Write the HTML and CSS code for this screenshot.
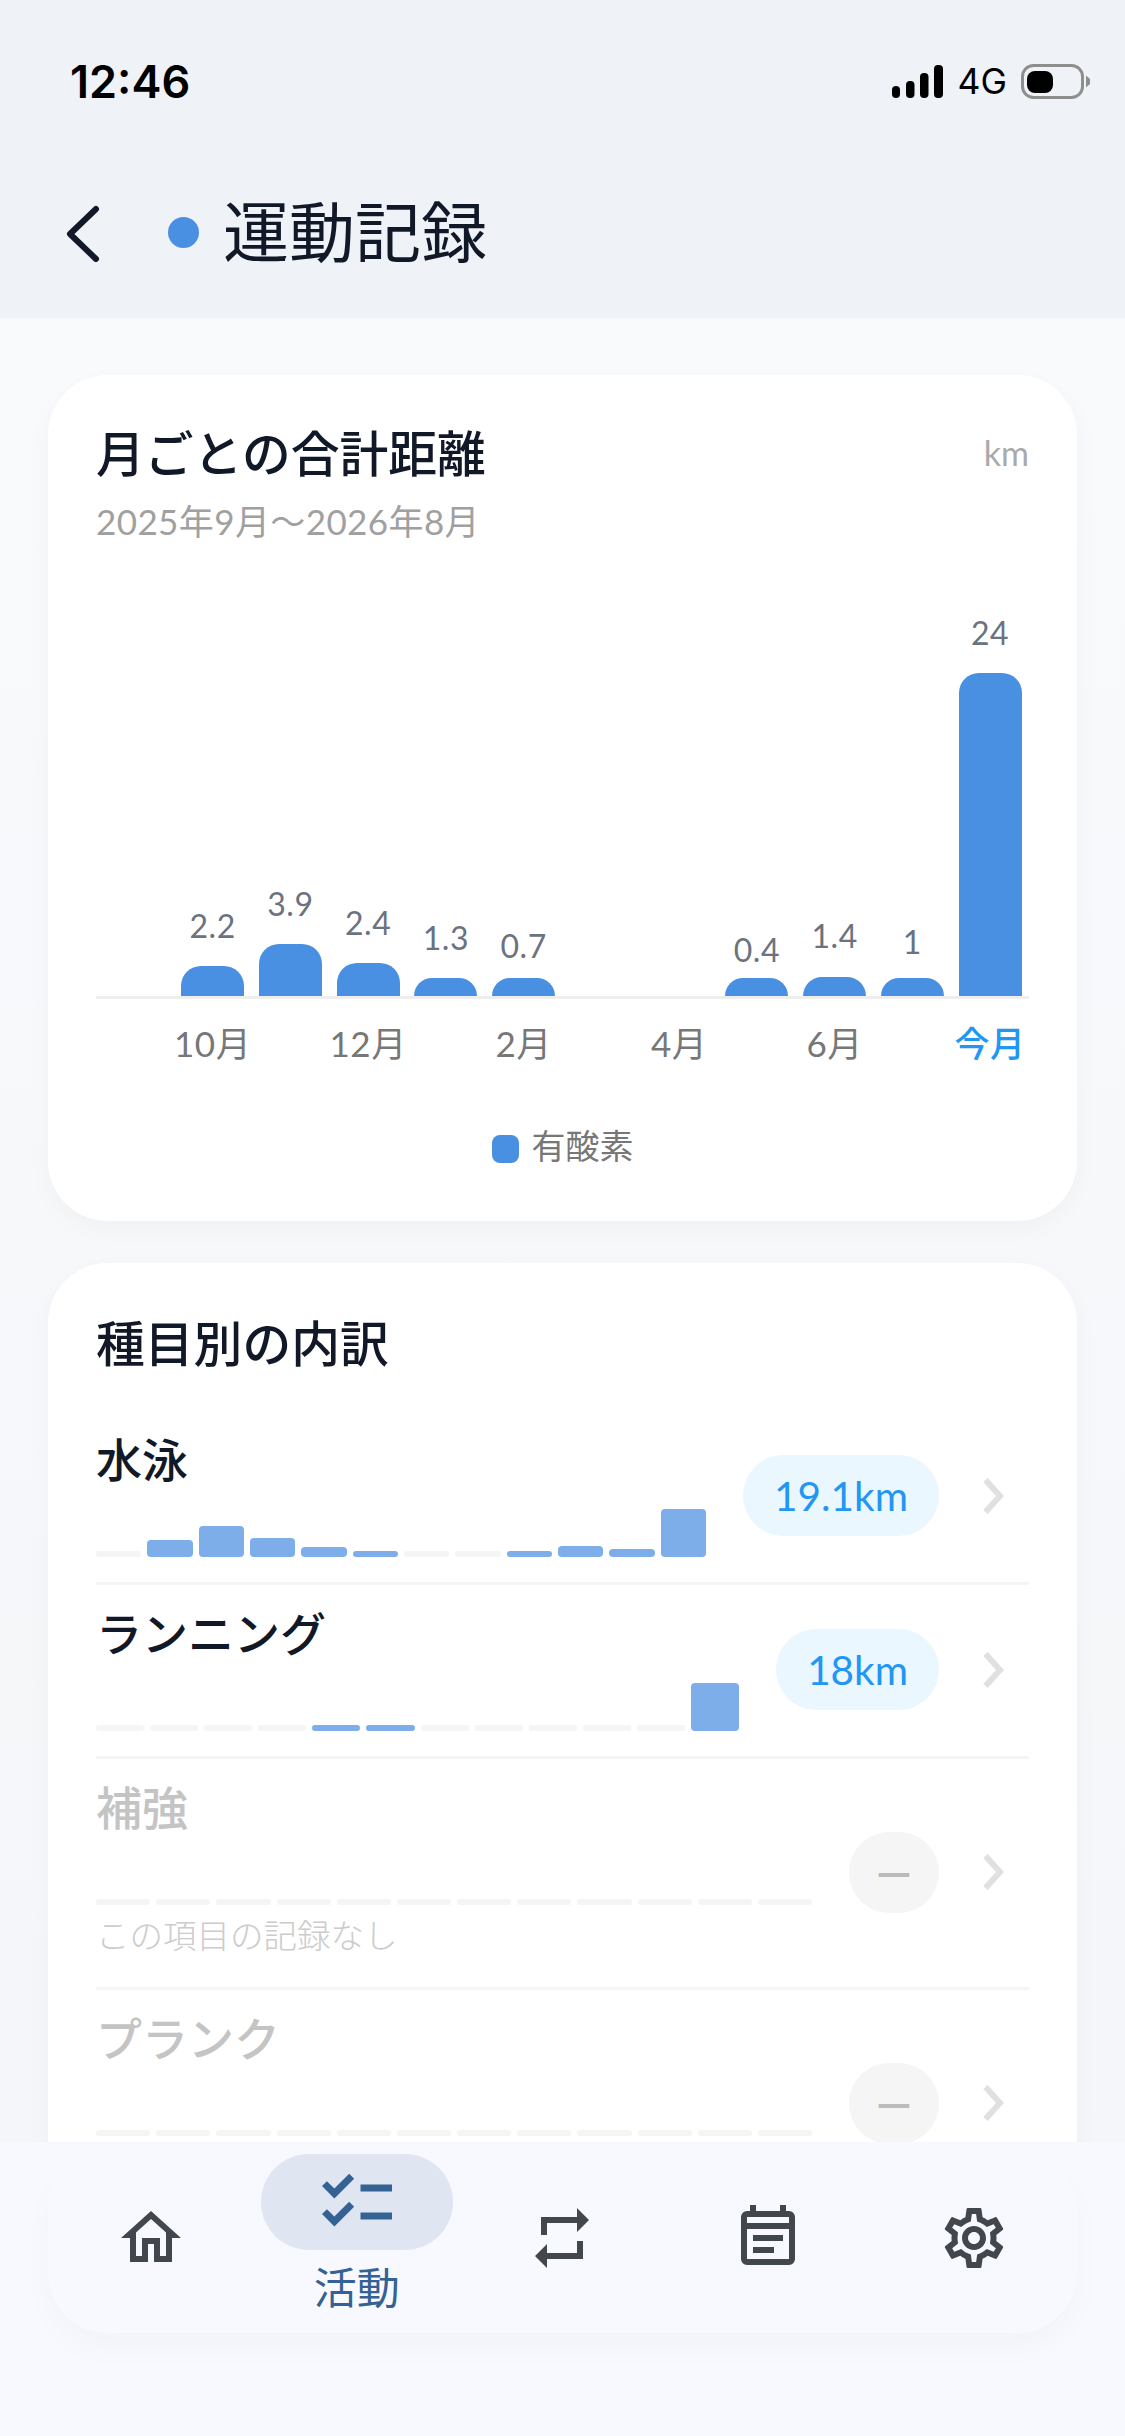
FILE: index.html
```html
<!DOCTYPE html>
<html lang="ja">

<head>
<meta charset="UTF-8" />
<title>運動記録</title>
<meta name="viewport" content="width=device-width" />
<link rel="stylesheet" href="styles.css">
</head>

<body>

<header class="topArea">
	<div class="statusBar">
		<span class="clock">12:46</span>
		<div class="statusIcons">
			<svg class="signal" width="52" height="33" viewBox="0 0 52 33" fill="#000">
				<rect x="0" y="21" width="8" height="12" rx="4"/>
				<rect x="14" y="16" width="8.5" height="17" rx="4"/>
				<rect x="28" y="8" width="8.5" height="25" rx="4"/>
				<rect x="42" y="0" width="9" height="33" rx="4"/>
			</svg>
			<span class="netType">4G</span>
			<svg class="battery" width="70" height="35" viewBox="0 0 70 35">
				<rect x="1.5" y="1.5" width="60" height="32" rx="11" fill="none" stroke="#8e8e8e" stroke-width="3"/>
				<rect x="6" y="7" width="26" height="22" rx="8" fill="#000"/>
				<path d="M65 11.5 L69 15 V20 L65 23.5 Z" fill="#8e8e8e"/>
			</svg>
		</div>
	</div>
	<div class="titleBar">
		<svg class="backIcon" width="36" height="60" viewBox="0 0 36 60">
			<path d="M31 7 L5 32 L31 57" fill="none" stroke="#111827" stroke-width="6" stroke-linecap="round" stroke-linejoin="round"/>
		</svg>
		<span class="titleDot"></span>
		<h1 class="pageTitle">運動記録</h1>
	</div>
</header>

<main class="content">

	<section class="card chartCard">
		<div class="cardHead">
			<h2 class="cardTitle">月ごとの合計距離</h2>
			<span class="unit">km</span>
		</div>
		<p class="period">2025年9月〜2026年8月</p>

		<div class="bars">
			<div class="barCol"></div>
			<div class="barCol"><span class="barValue">2.2</span><div class="bar" style="height:30px"></div></div>
			<div class="barCol"><span class="barValue">3.9</span><div class="bar" style="height:52px"></div></div>
			<div class="barCol"><span class="barValue">2.4</span><div class="bar" style="height:33px"></div></div>
			<div class="barCol"><span class="barValue">1.3</span><div class="bar" style="height:18px"></div></div>
			<div class="barCol"><span class="barValue" style="margin-bottom:14px">0.7</span><div class="bar" style="height:18px"></div></div>
			<div class="barCol"></div>
			<div class="barCol"></div>
			<div class="barCol"><span class="barValue" style="margin-bottom:10px">0.4</span><div class="bar" style="height:18px"></div></div>
			<div class="barCol"><span class="barValue" style="margin-bottom:23px">1.4</span><div class="bar" style="height:19px"></div></div>
			<div class="barCol"><span class="barValue" style="margin-bottom:18px">1</span><div class="bar" style="height:18px"></div></div>
			<div class="barCol"><span class="barValue">24</span><div class="bar" style="height:323px"></div></div>
		</div>
		<div class="months">
			<span></span><span>10月</span>
			<span></span><span>12月</span>
			<span></span><span>2月</span>
			<span></span><span>4月</span>
			<span></span><span>6月</span>
			<span></span><span class="thisMonth">今月</span>
		</div>
		<div class="legend"><i class="legendMark"></i>有酸素</div>
	</section>

	<section class="card breakdownCard">
		<h2 class="cardTitle breakdownTitle">種目別の内訳</h2>

		<div class="row">
			<div class="rowMain">
				<div class="rowName">水泳</div>
				<div class="miniBars">
					<i></i>
					<i class="on" style="height:17px"></i>
					<i class="on" style="height:31px"></i>
					<i class="on" style="height:19px"></i>
					<i class="on" style="height:10px"></i>
					<i class="on"></i>
					<i></i>
					<i></i>
					<i class="on"></i>
					<i class="on" style="height:11px"></i>
					<i class="on" style="height:8px"></i>
					<i class="on" style="height:48px"></i>
				</div>
			</div>
			<span class="pill">19.1km</span>
			<svg class="chevron" width="21" height="36" viewBox="0 0 21 36"><path d="M2.5 2 L17 18 L2.5 34" fill="none" stroke="#e0e0e0" stroke-width="6"/></svg>
		</div>

		<div class="row">
			<div class="rowMain">
				<div class="rowName">ランニング</div>
				<div class="miniBars">
					<i></i><i></i><i></i><i></i>
					<i class="on"></i>
					<i class="on"></i>
					<i></i><i></i><i></i><i></i><i></i>
					<i class="on" style="height:48px"></i>
				</div>
			</div>
			<span class="pill">18km</span>
			<svg class="chevron" width="21" height="36" viewBox="0 0 21 36"><path d="M2.5 2 L17 18 L2.5 34" fill="none" stroke="#e0e0e0" stroke-width="6"/></svg>
		</div>

		<div class="row empty">
			<div class="rowMain">
				<div class="rowName">補強</div>
				<div class="miniBars">
					<i></i><i></i><i></i><i></i><i></i><i></i><i></i><i></i><i></i><i></i><i></i><i></i>
				</div>
				<div class="noRecord">この項目の記録なし</div>
			</div>
			<span class="pill">—</span>
			<svg class="chevron" width="21" height="36" viewBox="0 0 21 36"><path d="M2.5 2 L17 18 L2.5 34" fill="none" stroke="#e0e0e0" stroke-width="6"/></svg>
		</div>

		<div class="row empty">
			<div class="rowMain">
				<div class="rowName">プランク</div>
				<div class="miniBars">
					<i></i><i></i><i></i><i></i><i></i><i></i><i></i><i></i><i></i><i></i><i></i><i></i>
				</div>
			</div>
			<span class="pill">—</span>
			<svg class="chevron" width="21" height="36" viewBox="0 0 21 36"><path d="M2.5 2 L17 18 L2.5 34" fill="none" stroke="#e0e0e0" stroke-width="6"/></svg>
		</div>
	</section>

</main>

<nav class="bottomArea">
	<div class="tabBar">
		<div class="tab">
			<svg width="72" height="72" viewBox="0 0 24 24" fill="#42474e"><path d="M12 5.69l5 4.5V18h-2v-6H9v6H7v-7.81l5-4.5M12 3L2 12h3v8h6v-6h2v6h6v-8h3L12 3z"/></svg>
		</div>
		<div class="tab active">
			<div class="tabPill">
				<svg width="84" height="84" viewBox="0 0 24 24" fill="#356294"><path d="M22 7h-9v2h9V7zm0 8h-9v2h9v-2zM5.54 11 2 7.46l1.41-1.41 2.12 2.12 4.24-4.24 1.41 1.41L5.54 11zm0 8L2 15.46l1.41-1.41 2.12 2.12 4.24-4.24 1.41 1.41L5.54 19z"/></svg>
			</div>
			<span class="tabLabel">活動</span>
		</div>
		<div class="tab">
			<svg width="72" height="72" viewBox="0 0 24 24" fill="#42474e"><path d="M7 7h10v3l4-4-4-4v3H5v6h2V7zm10 10H7v-3l-4 4 4 4v-3h12v-6h-2v4z"/></svg>
		</div>
		<div class="tab">
			<svg width="72" height="72" viewBox="0 0 24 24" fill="#42474e" fill-rule="evenodd"><path d="M7 11h10v2H7zM7 15h7v2H7zM19 3h-1V1h-2v2H8V1H6v2H5a2 2 0 0 0-2 2v14a2 2 0 0 0 2 2h14a2 2 0 0 0 2-2V5a2 2 0 0 0-2-2zM5 5h14v2H5zM5 9h14v10H5z"/></svg>
		</div>
		<div class="tab">
			<svg width="72" height="72" viewBox="0 0 24 24" fill="#42474e"><path d="M19.43 12.98c.04-.32.07-.64.07-.98 0-.34-.03-.66-.07-.98l2.11-1.65c.19-.15.24-.42.12-.64l-2-3.46c-.09-.16-.26-.25-.44-.25-.06 0-.12.01-.17.03l-2.49 1c-.52-.4-1.08-.73-1.69-.98l-.38-2.65C14.46 2.18 14.25 2 14 2h-4c-.25 0-.46.18-.49.42l-.38 2.65c-.61.25-1.17.59-1.69.98l-2.49-1c-.06-.02-.12-.03-.18-.03-.17 0-.34.09-.43.25l-2 3.46c-.13.22-.07.49.12.64l2.11 1.65c-.04.32-.07.65-.07.98 0 .33.03.66.07.98l-2.11 1.65c-.19.15-.24.42-.12.64l2 3.46c.09.16.26.25.44.25.06 0 .12-.01.17-.03l2.49-1c.52.4 1.08.73 1.69.98l.38 2.65c.03.24.24.42.49.42h4c.25 0 .46-.18.49-.42l.38-2.65c.61-.25 1.17-.59 1.69-.98l2.49 1c.06.02.12.03.18.03.17 0 .34-.09.43-.25l2-3.46c.12-.22.07-.49-.12-.64l-2.11-1.65zm-1.98-1.71c.04.31.05.52.05.73 0 .21-.02.43-.05.73l-.14 1.13.89.7 1.08.84-.7 1.21-1.27-.51-1.04-.42-.9.68c-.43.32-.84.56-1.25.73l-1.06.43-.16 1.13-.2 1.35h-1.4l-.19-1.35-.16-1.13-1.06-.43c-.43-.18-.83-.41-1.23-.71l-.91-.7-1.06.43-1.27.51-.7-1.21 1.08-.84.89-.7-.14-1.13c-.03-.31-.05-.54-.05-.74s.02-.43.05-.73l.14-1.13-.89-.7-1.08-.84.7-1.21 1.27.51 1.04.42.9-.68c.43-.32.84-.56 1.25-.73l1.06-.43.16-1.13.2-1.35h1.39l.19 1.35.16 1.13 1.06.43c.43.18.83.41 1.23.71l.91.7 1.06-.43 1.27-.51.7 1.21-1.07.85-.89.7.14 1.13zM12 8c-2.21 0-4 1.79-4 4s1.79 4 4 4 4-1.79 4-4-1.79-4-4-4zm0 6c-1.1 0-2-.9-2-2s.9-2 2-2 2 .9 2 2-.9 2-2 2z"/></svg>
		</div>
	</div>
</nav>

</body>
</html>
```

FILE: styles.css
```css
* {
box-sizing: border-box;
}

html, body {
margin: 0;
padding: 0;
}

body {
width: 1125px;
height: 2436px;
overflow: hidden;
display: flex;
flex-direction: column;
background: #f9fafc;
color: #111827;
font-family: Lato, "Noto Sans CJK JP", sans-serif;
}

h1, h2, p {
margin: 0;
font-weight: normal;
}

/* top area */
.topArea {
height: 318px;
flex: none;
padding-top: 65px;
background: #eff2f7;
}

.statusBar {
display: flex;
justify-content: space-between;
align-items: center;
height: 33px;
padding: 0 34px 0 70px;
font-family: Inter, sans-serif;
color: #000;
}

.clock {
font-size: 45px;
font-weight: 600;
}

.statusIcons {
display: flex;
align-items: center;
gap: 14px;
}

.netType {
font-size: 35.5px;
}

.titleBar {
display: flex;
align-items: center;
height: 60px;
margin-top: 104px;
padding-left: 65px;
}

.backIcon {
flex: none;
}

.titleDot {
width: 31px;
height: 31px;
margin-left: 67px;
border-radius: 50%;
background: #4a90e2;
}

.pageTitle {
margin-left: 24px;
font-size: 66px;
line-height: 60px;
}

/* cards */
.content {
flex: 1;
min-height: 0;
overflow: hidden;
padding: 57px 48px 0;
background: linear-gradient(#f9fafc, #f5f6f9);
}

.card {
padding: 48px;
border-radius: 60px;
background: #fff;
box-shadow: 0 8px 24px rgba(0, 0, 0, 0.03);
}

.cardHead {
display: flex;
justify-content: space-between;
align-items: center;
}

.cardTitle {
font-size: 48.8px;
line-height: 60px;
font-weight: 500;
}

.unit {
font-size: 34px;
line-height: 60px;
color: #aaa;
}

.period {
margin-top: 15px;
font-size: 35px;
line-height: 46px;
letter-spacing: 0.4px;
color: #a0a0a0;
}

/* month chart */
.chartCard {
padding-bottom: 53px;
margin-bottom: 42px;
}

.bars {
display: grid;
grid-template-columns: repeat(12, 1fr);
height: 455px;
border-bottom: 3px solid #eee;
}

.barCol {
display: flex;
flex-direction: column;
justify-content: flex-end;
align-items: center;
}

.barValue {
margin-bottom: 22px;
font-size: 32px;
line-height: 36px;
letter-spacing: 0.5px;
color: #6b7280;
}

.bar {
width: 63px;
border-radius: 20px 20px 0 0;
background: #4a90e2;
}

.months {
display: grid;
grid-template-columns: repeat(12, 1fr);
margin-top: 22px;
font-size: 35px;
line-height: 44px;
letter-spacing: 0.5px;
color: #777;
text-align: center;
}

.thisMonth {
color: #2196f3;
font-weight: 500;
}

.legend {
display: flex;
justify-content: center;
align-items: center;
gap: 13px;
margin-top: 59px;
font-size: 34px;
line-height: 44px;
color: #777;
}

.legendMark {
width: 27px;
height: 28px;
margin-top: 5px;
border-radius: 8px;
background: #4a90e2;
}

/* breakdown */
.breakdownCard {
padding-top: 50px;
}

.breakdownTitle {
margin-bottom: 38px;
}

.row {
display: flex;
align-items: center;
padding: 25px 0;
border-bottom: 3px solid #f5f5f5;
}

.rowMain {
flex: 1;
align-self: flex-start;
min-width: 0;
margin-right: 37px;
}

.rowName {
font-size: 46px;
line-height: 48px;
font-weight: 500;
}

.miniBars {
display: flex;
align-items: flex-end;
gap: 6px;
height: 50px;
margin-top: 23px;
}

.miniBars i {
flex: 1;
height: 6px;
border-radius: 4px;
background: #f5f5f5;
}

.miniBars .on {
background: #7eaee9;
}

.pill {
flex: none;
height: 81px;
margin-bottom: 2px;
padding: 0 31px;
border-radius: 41px;
background: #ebf7fe;
color: #2196f3;
font-size: 40.5px;
line-height: 81px;
}

.chevron {
flex: none;
margin: 0 25px 2px 44px;
}

.empty {
min-height: 231px;
}

.empty .rowName {
color: #c4c4c4;
}

.empty .pill {
width: 90px;
padding: 0;
background: #f5f5f5;
color: #bbb;
font-size: 45px;
font-weight: 700;
text-align: center;
}

.noRecord {
margin: 8px 0 5px;
font-size: 33.5px;
line-height: 44px;
color: #ccc;
font-weight: 300;
}

/* bottom tabs */
.bottomArea {
height: 294px;
flex: none;
padding-top: 8px;
background: #f8f9fe;
position: relative;
}

.tabBar {
display: grid;
grid-template-columns: repeat(5, 1fr);
align-items: center;
height: 183px;
margin: 0 48px;
padding-bottom: 7px;
border-radius: 60px;
background: #f8f9ff;
box-shadow: 0 16px 32px rgba(0, 0, 0, 0.025);
}

.tab {
display: flex;
flex-direction: column;
align-items: center;
}

.tabPill {
display: flex;
justify-content: center;
align-items: center;
width: 192px;
height: 96px;
border-radius: 48px;
background: #dfe5f1;
}

.tabLabel {
margin: 15px 0 11px;
font-size: 43px;
line-height: 46px;
color: #356294;
}
```
